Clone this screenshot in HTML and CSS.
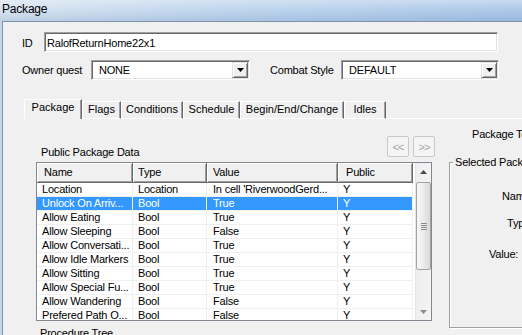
FILE: index.html
```html
<!DOCTYPE html>
<html lang="en">

<head>
    <meta charset="UTF-8">
    <title>Package</title>
    <link rel="stylesheet" href="styles.css">
</head>

<body>
    <div class="window">
        <div class="titlebar">Package</div>
        <div class="frame">
            <div class="client">
                <div class="field-row row-id">
                    <label class="lbl lbl-id">ID</label>
                    <div class="sunken id-box">RalofReturnHome22x1</div>
                </div>

                <div class="field-row row-owner">
                    <label class="lbl lbl-owner">Owner quest</label>
                    <div class="sunken combo owner-combo">
                        <span class="combo-text">NONE</span>
                        <span class="combo-btn">
                            <svg width="7" height="4" viewBox="0 0 7 4"><path d="M0 0H7L3.5 4Z" fill="#000"/></svg>
                        </span>
                    </div>
                    <label class="lbl lbl-combat">Combat Style</label>
                    <div class="sunken combo combat-combo">
                        <span class="combo-text">DEFAULT</span>
                        <span class="combo-btn">
                            <svg width="7" height="4" viewBox="0 0 7 4"><path d="M0 0H7L3.5 4Z" fill="#000"/></svg>
                        </span>
                    </div>
                </div>

                <div class="tabs">
                    <div class="tab active" style="width: 58px">Package</div>
                    <div class="tab" style="width: 39px">Flags</div>
                    <div class="tab" style="width: 62px">Conditions</div>
                    <div class="tab" style="width: 57px">Schedule</div>
                    <div class="tab" style="width: 104px">Begin/End/Change</div>
                    <div class="tab" style="width: 42px">Idles</div>
                    <div class="tab-fill"></div>
                </div>

                <div class="tab-page">
                    <div class="data-col">
                        <div class="data-head">
                            <span class="caption">Public Package Data</span>
                            <div class="nav-btns">
                                <button class="nav-btn" disabled>&lt;&lt;</button>
                                <button class="nav-btn" disabled>&gt;&gt;</button>
                            </div>
                        </div>

                        <div class="listview">
                            <div class="list-main">
                                <div class="lv-header">
                                    <div class="hcell c-name">Name</div>
                                    <div class="hcell c-type">Type</div>
                                    <div class="hcell c-value">Value</div>
                                    <div class="hcell c-public">Public</div>
                                </div>
                                <div id="rows"></div>
                            </div>
                            <div class="vscroll">
                                <div class="sb-btn">
                                    <svg width="7" height="4" viewBox="0 0 7 4"><path d="M0 4H7L3.5 0Z" fill="#4a4a4a"/></svg>
                                </div>
                                <div class="sb-thumb"><div class="grip"></div></div>
                                <div class="sb-track"></div>
                                <div class="sb-btn">
                                    <svg width="7" height="4" viewBox="0 0 7 4"><path d="M0 0H7L3.5 4Z" fill="#8a8a8a"/></svg>
                                </div>
                            </div>
                        </div>

                        <div class="proc-label">Procedure Tree</div>
                    </div>

                    <div class="side-col">
                        <div class="side-title">Package Template</div>
                        <div class="groupbox">
                            <div class="legend">Selected Package Data</div>
                            <div class="gb-label gb-name">Name:</div>
                            <div class="gb-label gb-type">Type:</div>
                            <div class="gb-label gb-value">Value:</div>
                        </div>
                    </div>
                </div>
            </div>
        </div>
    </div>

    <script>
        const packageData = [
            { name: "Location", type: "Location", value: "In cell 'RiverwoodGerd...", pub: "Y" },
            { name: "Unlock On Arriv...", type: "Bool", value: "True", pub: "Y", selected: true },
            { name: "Allow Eating", type: "Bool", value: "True", pub: "Y" },
            { name: "Allow Sleeping", type: "Bool", value: "False", pub: "Y" },
            { name: "Allow Conversati...", type: "Bool", value: "True", pub: "Y" },
            { name: "Allow Idle Markers", type: "Bool", value: "True", pub: "Y" },
            { name: "Allow Sitting", type: "Bool", value: "True", pub: "Y" },
            { name: "Allow Special Fu...", type: "Bool", value: "True", pub: "Y" },
            { name: "Allow Wandering", type: "Bool", value: "False", pub: "Y" },
            { name: "Prefered Path O...", type: "Bool", value: "False", pub: "Y" }
        ];

        // Fill the list view
        const rowsContainer = document.getElementById('rows');
        packageData.forEach(item => {
            const row = document.createElement('div');
            row.classList.add('lv-row');
            if (item.selected) {
                row.classList.add('selected');
            }
            row.innerHTML = `
                <div class="cell c-name">${item.name}</div>
                <div class="cell c-type">${item.type}</div>
                <div class="cell c-value">${item.value}</div>
                <div class="cell c-public">${item.pub}</div>
            `;
            rowsContainer.appendChild(row);
        });
    </script>
</body>

</html>
```

FILE: styles.css
```css
* {
    margin: 0;
    padding: 0;
    box-sizing: border-box;
}

body {
    width: 522px;
    height: 335px;
    overflow: hidden;
    background-color: #f0f0f0;
    font-family: 'Liberation Sans', Arial, sans-serif;
    font-size: 11px;
    letter-spacing: -0.2px;
    color: #000;
}

.window {
    width: 522px;
    height: 335px;
    display: flex;
    flex-direction: column;
    overflow: hidden;
}

/* Title bar */
.titlebar {
    flex: none;
    height: 21px;
    padding: 2px 0 0 2px;
    font-size: 12px;
    line-height: 14px;
    background:
        linear-gradient(to bottom, rgba(255, 255, 255, 0.35), rgba(255, 255, 255, 0) 55%, rgba(40, 80, 140, 0.12)),
        linear-gradient(to right, #d4e2f0, #bcd3ec 45%, #a9c6e7);
}

.frame {
    flex: 1;
    display: flex;
    padding-left: 2px;
    background-color: #c3d6eb;
}

.client {
    flex: 1;
    min-width: 0;
    background-color: #f0f0f0;
    border-left: 1px solid #7f93ad;
    border-top: 1px solid #7f93ad;
    padding: 10px 0 0 19px;
}

/* Sunken edit fields */
.sunken {
    background-color: #fff;
    border: 1px solid;
    border-color: #a0a0a0 #fff #fff #a0a0a0;
    box-shadow: inset 1px 1px 0 #696969, inset -1px -1px 0 #e3e3e3;
}

.field-row {
    display: flex;
    height: 20px;
}

.lbl {
    flex: none;
    white-space: nowrap;
}

.lbl-id {
    width: 22px;
    padding-top: 2px;
    line-height: 18px;
}

.id-box {
    width: 454px;
    padding: 2px 0 0 2px;
    line-height: 16px;
}

.row-owner {
    margin-top: 8px;
}

.row-owner .lbl {
    padding-top: 1px;
    line-height: 19px;
}

.lbl-owner {
    width: 69px;
}

.lbl-combat {
    width: 91px;
    padding-left: 20px;
}

.combo {
    display: flex;
    padding: 1px;
}

.owner-combo {
    width: 159px;
}

.combat-combo {
    width: 158px;
}

.combo-text {
    flex: 1;
    padding: 1px 0 0 6px;
    line-height: 15px;
}

.combo-btn {
    width: 16px;
    height: 16px;
    display: flex;
    align-items: center;
    justify-content: center;
    background-color: #f0f0f0;
    border: 1px solid;
    border-color: #e3e3e3 #696969 #696969 #e3e3e3;
    box-shadow: inset 1px 1px 0 #fff, inset -1px -1px 0 #a0a0a0;
}

/* Tab strip */
.tabs {
    display: flex;
    align-items: flex-end;
    height: 20px;
    margin: 19px 0 0 2px;
}

.tab {
    flex: none;
    height: 18px;
    padding-top: 1px;
    line-height: 13px;
    text-align: center;
    letter-spacing: 0;
    white-space: nowrap;
    border-top: 1px solid #fff;
    border-left: 1px solid #fff;
    border-right: 1px solid #696969;
    border-bottom: 1px solid #fff;
    box-shadow: inset -1px 0 0 #a0a0a0;
}

.tab.active {
    height: 20px;
    border-bottom: none;
}

.tab-fill {
    flex: 1;
    height: 1px;
    background-color: #fff;
}

/* Tab page */
.tab-page {
    display: flex;
    padding-left: 14px;
}

.data-col {
    flex: none;
    width: 399px;
    padding-top: 17px;
}

.data-head {
    display: flex;
    justify-content: space-between;
    height: 21px;
}

.caption {
    padding: 10px 0 0 5px;
    line-height: 13px;
    white-space: nowrap;
}

.nav-btns {
    display: flex;
    gap: 4px;
}

.nav-btn {
    width: 22px;
    height: 21px;
    font-family: 'Liberation Sans', Arial, sans-serif;
    font-size: 11px;
    letter-spacing: -1px;
    color: #a3a3a3;
    background-color: #f4f4f4;
    border: 1px solid #c9c9c9;
    border-radius: 2px;
}

/* List view */
.listview {
    display: flex;
    width: 396px;
    height: 159px;
    margin-top: 5px;
    overflow: hidden;
    background-color: #fff;
    border: 1px solid #828790;
}

.list-main {
    width: 376px;
}

.lv-header {
    display: flex;
    height: 20px;
}

.hcell {
    height: 20px;
    padding-top: 3px;
    line-height: 13px;
    white-space: nowrap;
    background-color: #f0f0f0;
    border-right: 1px solid #696969;
    border-bottom: 1px solid #696969;
    box-shadow: inset 1px 1px 0 #fff, inset -1px -1px 0 #a0a0a0;
}

.lv-row {
    display: flex;
    height: 14px;
    line-height: 13px;
    border-bottom: 1px solid #efefef;
}

.cell {
    overflow: hidden;
    white-space: nowrap;
    border-right: 1px solid #efefef;
}

.lv-row.selected {
    background-color: #3399ff;
    color: #fff;
}

.c-name {
    width: 96px;
    padding-left: 5px;
}

.c-type {
    width: 74px;
    padding-left: 5px;
}

.c-value {
    width: 131px;
    padding-left: 6px;
}

.c-public {
    width: 75px;
    padding-left: 5px;
}

.hcell.c-name {
    padding-left: 7px;
}

.hcell.c-public {
    padding-left: 8px;
}

/* Vertical scroll bar */
.vscroll {
    width: 18px;
    display: flex;
    flex-direction: column;
    background: linear-gradient(to right, #fff 0 2px, #e4e4e4 2px 3px, #eeeeee 3px, #f4f4f4);
}

.sb-btn {
    height: 17px;
    display: flex;
    align-items: center;
    justify-content: center;
    padding-left: 2px;
}

.sb-thumb {
    height: 88px;
    margin: 2px 0 0 3px;
    display: flex;
    align-items: center;
    justify-content: center;
    border: 1px solid #a3a3a3;
    border-radius: 2px;
    background: linear-gradient(to right, #f7f7f7, #ebebeb 50%, #d9d9d9);
}

.grip {
    width: 6px;
    height: 7px;
    background: repeating-linear-gradient(to bottom, #8c8c8c 0 1px, transparent 1px 2px);
}

.sb-track {
    flex: 1;
}

.proc-label {
    margin: 6px 0 0 4px;
    line-height: 13px;
}

/* Right side */
.side-col {
    flex: none;
    width: 120px;
    margin-left: 14px;
}

.side-title {
    margin: 9px 0 0 23px;
    line-height: 13px;
    white-space: nowrap;
}

.groupbox {
    height: 166px;
    margin-top: 21px;
    border: 1px solid #a0a0a0;
    box-shadow: inset 1px 1px 0 #fff, 1px 1px 0 #fff;
}

.legend {
    width: fit-content;
    margin: -7px 0 0 3px;
    padding: 0 2px;
    line-height: 13px;
    white-space: nowrap;
    background-color: #f0f0f0;
}

.gb-label {
    line-height: 13px;
    white-space: nowrap;
}

.gb-name {
    margin: 21px 0 0 52px;
}

.gb-type {
    margin: 14px 0 0 57px;
}

.gb-value {
    margin: 18px 0 0 39px;
}
```
